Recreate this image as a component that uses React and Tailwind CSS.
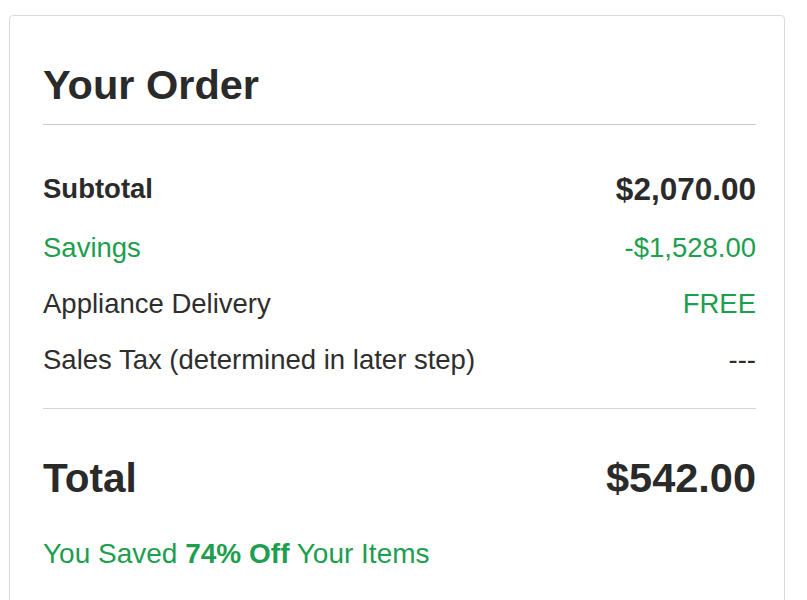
const rows = [
  { label: 'Savings', value: '-$1,528.00', labelClass: 'text-[#1e9e4f]', valueClass: 'text-[#1e9e4f]' },
  { label: 'Appliance Delivery', value: 'FREE', labelClass: 'text-[#2e2e2e]', valueClass: 'text-[#1e9e4f]' },
  { label: 'Sales Tax (determined in later step)', value: '---', labelClass: 'text-[#2e2e2e]', valueClass: 'text-[#2e2e2e]' },
];

const App = () => {
  return (
    <div className="min-h-screen bg-white pt-[15px] pl-[9px] font-['Liberation_Sans',Arial,sans-serif]">
      <div className="w-[776px] rounded-[4px] border border-[#dadada] pt-[45px] pl-[33px] pr-[28px] pb-[40px]">
        <h1 className="text-[41.5px] leading-[48px] font-bold text-[#2a2a2a]">Your Order</h1>
        <div className="mt-[15px] h-px bg-[#c8c8c8]" />

        <div className="mt-[33px] flex items-center justify-between leading-[62px]">
          <span className="text-[27.5px] font-bold text-[#2a2a2a]">Subtotal</span>
          <span className="text-[31.5px] font-bold text-[#2a2a2a]">$2,070.00</span>
        </div>

        {rows.map((row) => (
          <div key={row.label} className="flex items-center justify-between text-[27.5px] leading-[56px]">
            <span className={row.labelClass}>{row.label}</span>
            <span className={row.valueClass}>{row.value}</span>
          </div>
        ))}

        <div className="mt-[20px] h-px bg-[#d6d6d6]" />

        <div className="mt-[45px] flex items-center justify-between leading-[48px] font-bold text-[#2a2a2a]">
          <span className="text-[40.5px]">Total</span>
          <span className="text-[41.5px]">$542.00</span>
        </div>

        <p className="mt-[32px] text-[28px] leading-[40px] text-[#1e9e4f]">
          You Saved <span className="font-bold">74% Off</span> Your Items
        </p>
      </div>
    </div>
  );
};

export default App;
